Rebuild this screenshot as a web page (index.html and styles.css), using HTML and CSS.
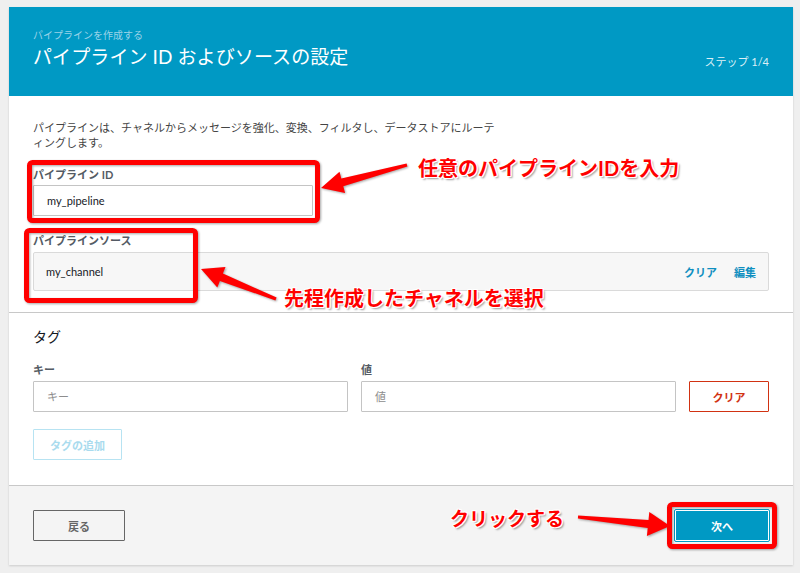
FILE: index.html
```html
<!DOCTYPE html>
<html lang="ja">
<head>
    <meta charset="UTF-8">
    <meta name="viewport" content="width=device-width, initial-scale=1.0">
    <title>パイプライン ID およびソースの設定</title>
    <link rel="stylesheet" href="styles.css">
</head>
<body>
    <div class="wizard">
        <header class="wizard__header">
            <div class="wizard__titles">
                <p class="wizard__crumb">パイプラインを作成する</p>
                <h1 class="wizard__title">パイプライン ID およびソースの設定</h1>
            </div>
            <span class="wizard__step">ステップ 1/4</span>
        </header>

        <section class="wizard__section">
            <p class="wizard__desc">パイプラインは、チャネルからメッセージを強化、変換、フィルタし、データストアにルーティングします。</p>

            <label class="field__label field__label--first">パイプライン ID</label>
            <div class="field__input field__input--id">my_pipeline</div>

            <label class="field__label">パイプラインソース</label>
            <div class="source">
                <span class="source__name">my_channel</span>
                <span class="source__actions">
                    <a class="source__link">クリア</a>
                    <a class="source__link">編集</a>
                </span>
            </div>
        </section>

        <section class="wizard__section wizard__section--tags">
            <h2 class="tags__title">タグ</h2>
            <div class="tags__row">
                <div>
                    <label class="field__label field__label--tag">キー</label>
                    <div class="field__input field__input--placeholder">キー</div>
                </div>
                <div>
                    <label class="field__label field__label--tag">値</label>
                    <div class="field__input field__input--placeholder">値</div>
                </div>
                <button class="btn btn--danger">クリア</button>
            </div>
            <button class="btn btn--disabled">タグの追加</button>
        </section>

        <footer class="wizard__footer">
            <button class="btn btn--back">戻る</button>
            <button class="btn btn--primary">次へ</button>
        </footer>
    </div>

    <!-- annotations drawn over the screenshot -->
    <svg class="marks" width="800" height="573" viewBox="0 0 800 573">
        <g class="marks__shapes">
            <rect x="29.5" y="162.5" width="288" height="58" rx="3"/>
            <rect x="26.5" y="230.5" width="169" height="70" rx="3"/>
            <rect x="669.5" y="504.5" width="105" height="42" rx="3"/>
            <polygon points="321,188 339.5,171.7 341.3,178.4 406.6,163.6 407.4,166.4 343.3,186.2 345.1,192.9"/>
            <polygon points="201,269 225.5,267 222.9,273.5 276.6,297.6 275.4,300.4 219.9,280.9 217.3,287.4"/>
            <polygon points="670,526 649.3,511.9 648.5,519.9 578.1,515.5 577.9,518.5 647.7,527.9 646.9,535.9"/>
        </g>
    </svg>
    <span class="note note--id">任意のパイプラインIDを入力</span>
    <span class="note note--source">先程作成したチャネルを選択</span>
    <span class="note note--next">クリックする</span>
</body>
</html>
```

FILE: styles.css
```css
html, body { margin: 0; height: 100%; }
body { position: relative; background: #efefef; font-family: Lato, "Noto Sans CJK JP", sans-serif; color: #444; }

.wizard { margin: 7px 0 0 9px; width: 784px; background: #fff; box-shadow: 0 1px 2px rgba(0,0,0,.15); }

.wizard__header { height: 89px; box-sizing: border-box; background: #0099c4; padding: 0 24px; display: flex; justify-content: space-between; align-items: flex-start; }
.wizard__crumb { margin: 21px 0 0; font-size: 10px; line-height: 14px; color: #9bd3e8; }
.wizard__title { margin: 3px 0 0; font-size: 19px; line-height: 24px; font-weight: 400; color: #fff; letter-spacing: .1px; }
.wizard__step { margin-top: 47px; font-size: 11px; line-height: 16px; color: #dcf0f7; }

.wizard__section { padding: 24px 24px 21px; border-bottom: 1px solid #c8c8c8; }
.wizard__section--tags { padding: 15px 24px 25px; border-bottom: 1px solid #c8c8c8; }
.wizard__desc { margin: 0; font-size: 11px; line-height: 15px; color: #444; width: 470px; line-break: loose; }

.field__label { display: block; margin-top: 18px; font-size: 11px; line-height: 14px; font-weight: 700; color: #545b64; }
.field__label--tag { margin-top: 17px; }
.field__input { box-sizing: border-box; height: 31px; margin-top: 3px; border: 1px solid #c4c4c4; border-radius: 1px; padding: 0 13px; font-size: 11px; line-height: 29px; color: #16191f; }
.field__input--id { width: 280px; }
.field__input--placeholder { margin-top: 4px; color: #8d8d8d; }

.source { box-sizing: border-box; height: 39px; margin-top: 4px; background: #f7f7f7; border: 1px solid #dadada; border-radius: 2px; padding: 0 12px; display: flex; justify-content: space-between; align-items: center; font-size: 11px; }
.source__name { color: #16191f; }
.source__actions { display: flex; gap: 17px; }
.source__link { color: #0f8fc0; font-weight: 700; }

.tags__title { margin: 0; font-size: 14px; line-height: 18px; font-weight: 400; color: #16191f; }
.tags__row { display: grid; grid-template-columns: 1fr 1fr 80px; gap: 13px; align-items: end; }

.btn { box-sizing: border-box; height: 31px; font-family: inherit; font-size: 11px; font-weight: 700; border-radius: 1px; background: transparent; padding: 0; }
.btn--danger { border: 1px solid #d13212; color: #d13212; }
.btn--disabled { margin-top: 17px; width: 89px; border: 1px solid #b7e3f2; color: #a9dbee; }

.wizard__footer { background: #f4f4f4; padding: 24px 24px 24px; display: flex; justify-content: space-between; }
.btn--back { width: 92px; border: 1px solid #666; color: #666; }
.btn--primary { width: 94px; border: 1px solid #fff; background: #0099c4; color: #fff; outline: 1px solid #0099c4; }

.marks { position: absolute; left: 0; top: 0; pointer-events: none; }
.marks__shapes { filter: drop-shadow(1px 1px 1px rgba(0,0,0,.35)); }
.marks__shapes rect { fill: none; stroke: #ff0000; stroke-width: 5; }
.marks__shapes polygon { fill: #ff0000; }

.note { position: absolute; font-size: 20px; line-height: 24px; font-weight: 700; color: #ff0000; white-space: nowrap;
    text-shadow: -1px -1px 0 #fff, 1px -1px 0 #fff, -1px 1px 0 #fff, 1px 1px 0 #fff, 0 -1px 0 #fff, 0 1px 0 #fff, -1px 0 0 #fff, 1px 0 0 #fff, 2px 2px 2px rgba(0,0,0,.4); }
.note--id { left: 418px; top: 156px; }
.note--source { left: 284px; top: 286px; }
.note--next { left: 450px; top: 507px; font-size: 19px; }
```
